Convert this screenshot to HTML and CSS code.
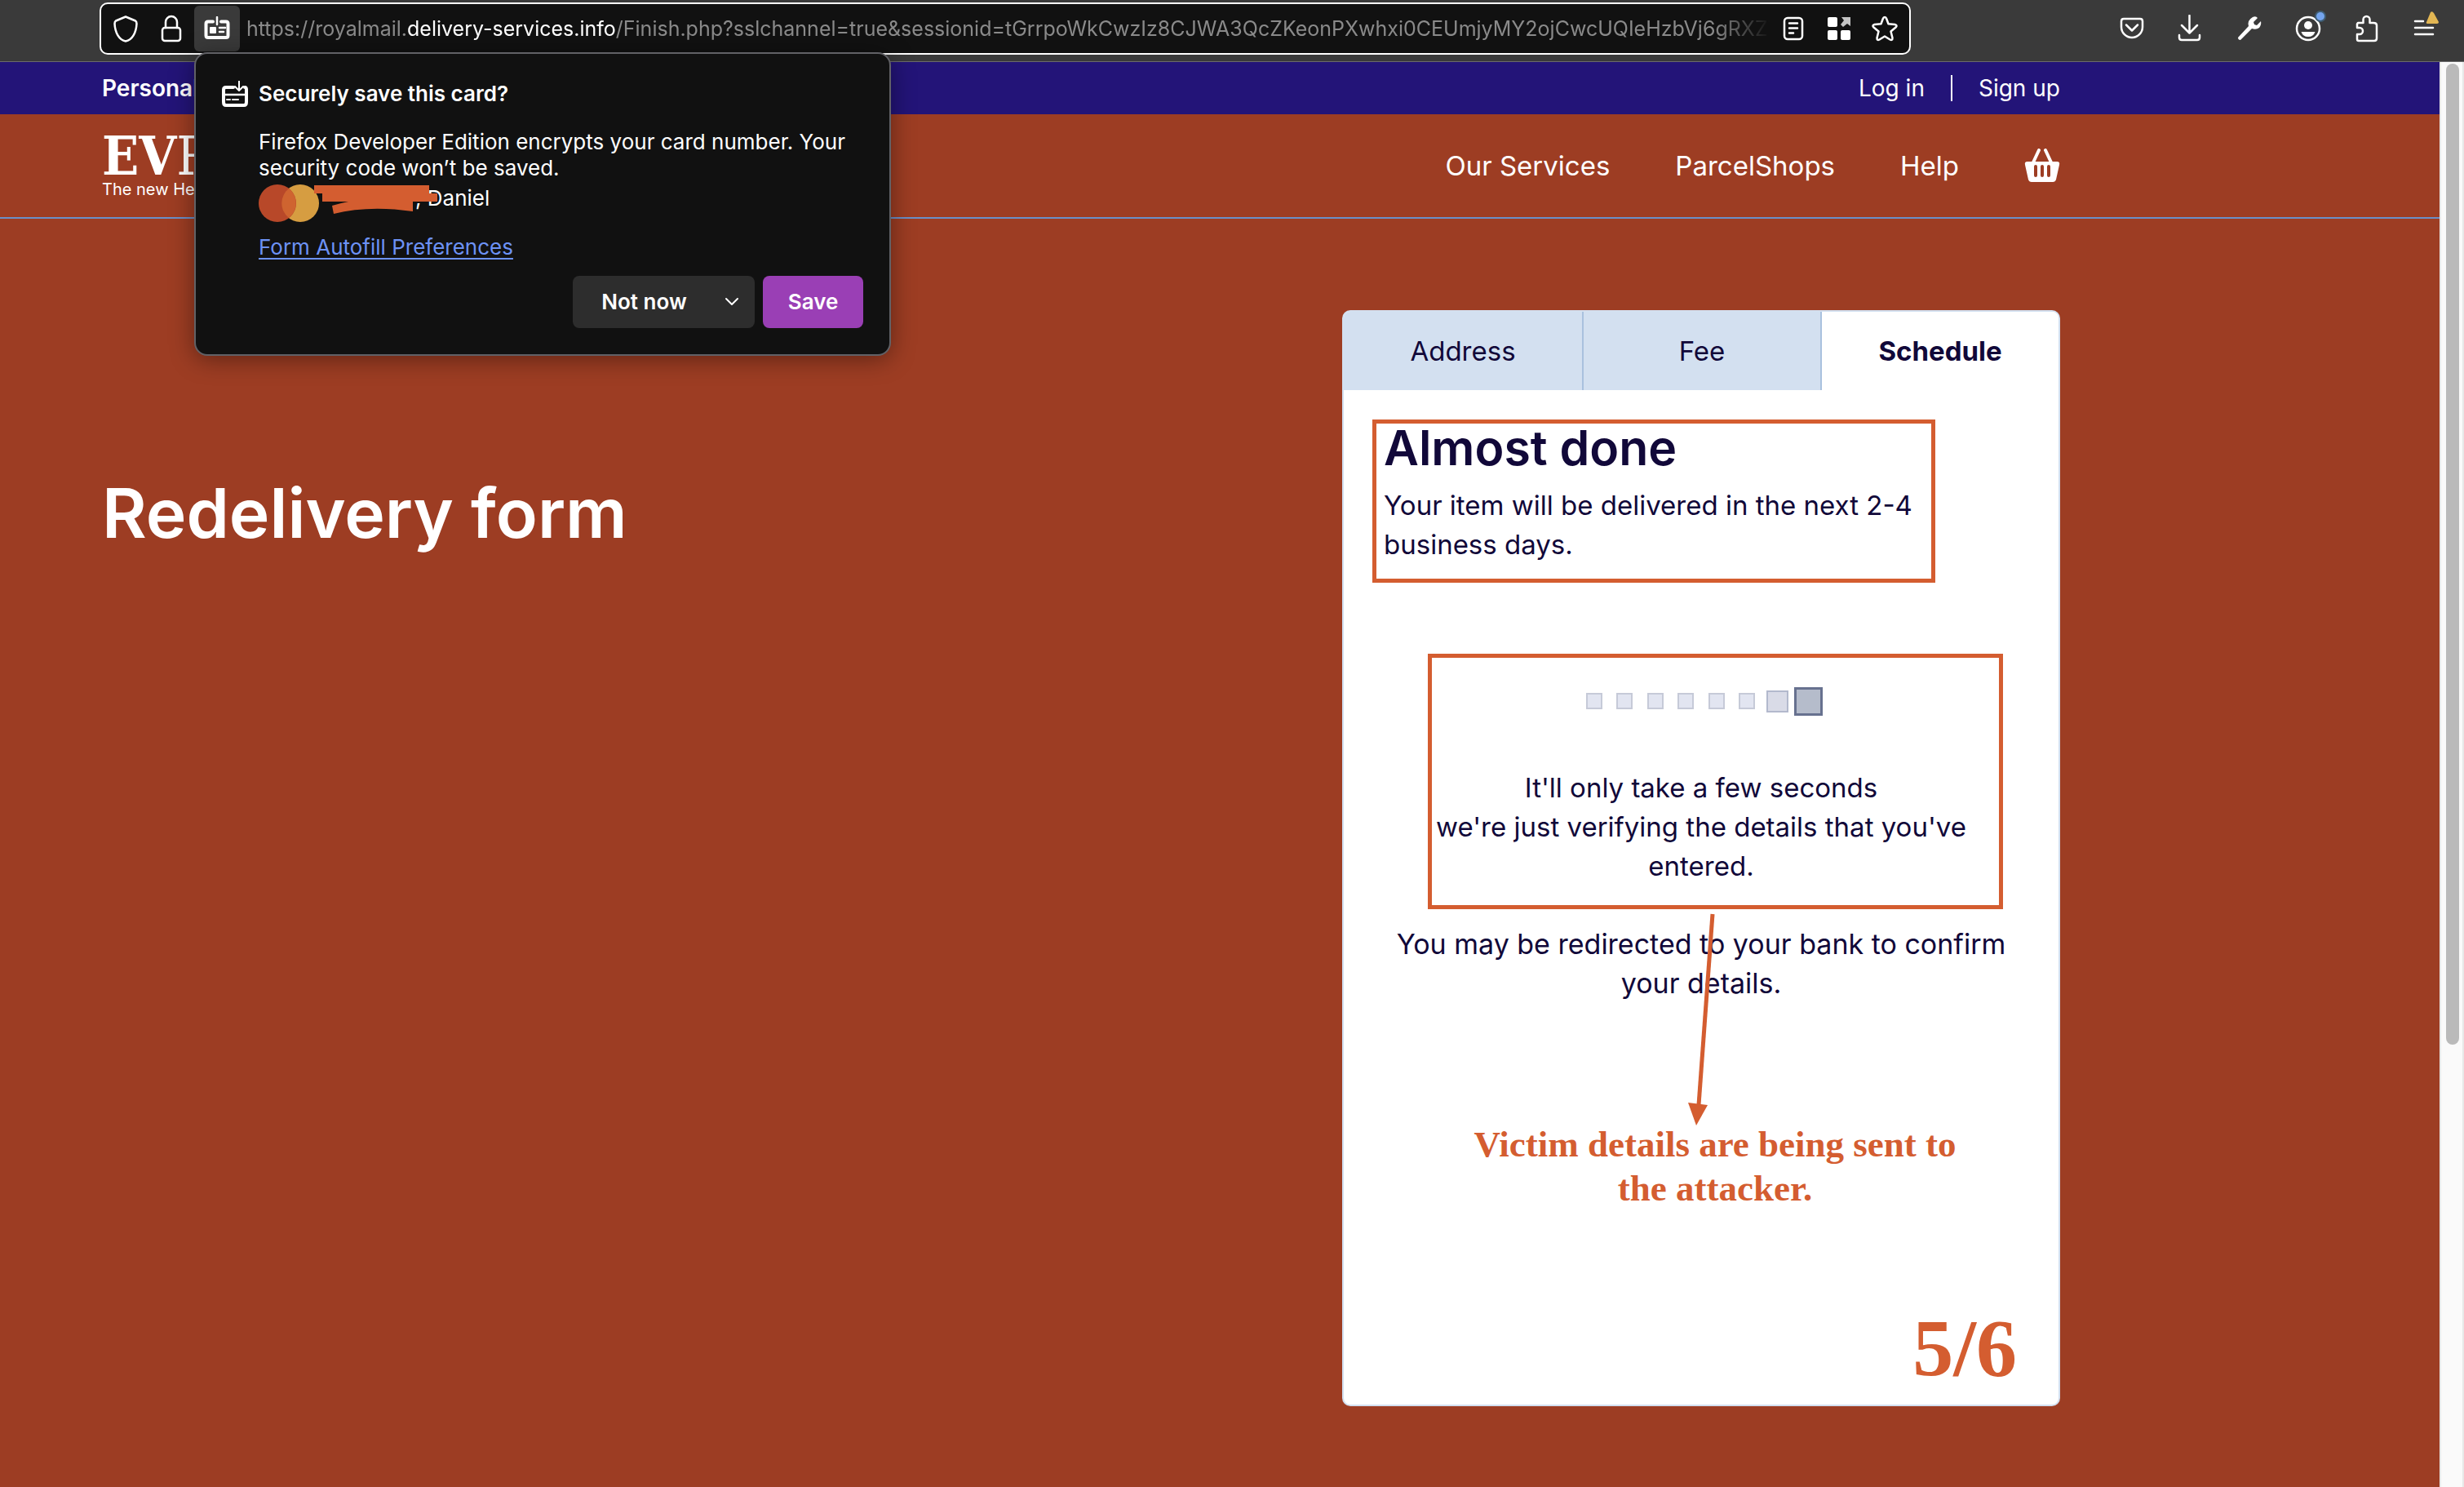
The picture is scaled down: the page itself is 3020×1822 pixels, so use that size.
FILE: index.html
```html
<!DOCTYPE html>
<html lang="en">
<head>
<meta charset="utf-8">
<meta name="viewport" content="width=device-width, initial-scale=1">
<title>Redelivery form</title>
<link rel="stylesheet" href="styles.css">
</head>
<body>
<div class="toolbar">
  <div class="urlbar">
    <button class="url-btn" aria-label="Tracking protection"><svg width="32" height="34" viewBox="0 0 32 34"><path d="M16 2.500L28 7.500Q29.500 8.500 29.500 11C29 22 24 31 16 32.500C8 31 3 22 2.500 11Q2.500 8.500 4 7.500Z" class="line"/></svg></button>
    <button class="url-btn" aria-label="Connection security"><svg width="26" height="34" viewBox="0 0 26 34"><path d="M6 16V9a7 7 0 0 1 14 0v7" class="line"/><rect x="2" y="16" width="22" height="16" rx="3" class="line"/></svg></button>
    <button class="url-btn url-btn-open" aria-label="Save card"><svg width="34" height="30" viewBox="0 0 34 30"><path d="M12 6.500H6Q3.500 6.500 3.500 9V23.500Q3.500 26 6 26H28Q30.500 26 30.500 23.500V9Q30.500 6.500 28 6.500H22" class="line thick"/><path d="M17 1v9M20 14h7M20 19h5" class="line"/><rect x="8" y="13" width="8" height="8" rx="1" class="fill"/></svg></button>
    <div class="address" role="textbox" aria-label="Address" tabindex="0">https://royalmail.<span class="domain">delivery-services.info</span>/Finish.php?sslchannel=true&amp;sessionid=tGrrpoWkCwzIz8CJWA3QcZKeonPXwhxi0CEUmjyMY2ojCwcUQIeHzbVj6gRXZTY</div>
    <button class="url-btn" aria-label="Reader view"><svg width="26" height="30" viewBox="0 0 26 30"><rect x="2" y="2" width="22" height="26" rx="4" class="line"/><path d="M8 8.500h10M8 14.500h10M8 20.500h5" class="line"/></svg></button>
    <button class="url-btn" aria-label="Open in container"><svg width="28" height="28" viewBox="0 0 28 28"><rect width="12" height="12" rx="2" class="fill"/><rect y="16" width="12" height="12" rx="2" class="fill"/><rect x="16" y="16" width="12" height="12" rx="2" class="fill"/><path d="M17 0h11v11l-4-3-5 4-3-3 4-5z" fill="#c4c4c4"/></svg></button>
    <button class="url-btn" aria-label="Bookmark"><svg width="34" height="34" viewBox="0 0 34 34"><path d="M17 3Q18.500 3 19.200 5L21.500 11.200L29.500 12Q33 13 30.500 15.500L24.500 20.500L26.500 28.500Q26.500 32 23.500 30.500L17 26.500L10.500 30.500Q7.500 32 7.500 28.500L9.500 20.500L3.500 15.500Q1 13 4.500 12L12.500 11.200L14.800 5Q15.500 3 17 3Z" class="line"/></svg></button>
  </div>
  <div class="tools">
    <button class="tool" aria-label="Pocket"><svg width="32" height="34" viewBox="0 0 32 34"><path d="M6 5H26Q29 5 29 8V15A13 13 0 0 1 3 15V8Q3 5 6 5ZM9 12.500l7 7 7-7" class="line"/></svg></button>
    <button class="tool" aria-label="Downloads"><svg width="32" height="34" viewBox="0 0 32 34"><path d="M14.500 1v21M5 13l9.500 9.500L24 13M2 25v3q0 3 3 3h19q3 0 3-3v-3" class="line"/></svg></button>
    <button class="tool" aria-label="Developer tools"><svg width="32" height="34" viewBox="0 0 32 34"><path d="M20 3Q24 1 26 4L21 9L22 12L25 13L30 8Q31 12 28 16Q24 19 19 17L5 31Q2 31 2 28L15 14Q13 7 20 3Z" class="fill"/></svg></button>
    <button class="tool" aria-label="Account"><svg width="44" height="46" viewBox="0 0 44 46"><circle cx="22" cy="23" r="14" class="line"/><circle cx="22" cy="19" r="5" class="fill"/><path d="M13.500 27h17q-2 6-8.500 6t-8.500-6z" class="fill"/><circle cx="37" cy="8" r="7" fill="#3f5d73"/><circle cx="37" cy="8" r="5" fill="#74a4ee"/></svg></button>
    <button class="tool" aria-label="Extensions"><svg width="32" height="34" viewBox="0 0 32 34"><path d="M5 10H11.500V6a4 4 0 0 1 8 0V10H24Q28 10 28 13V29Q28 32 25 32H6Q4 32 4 30V24H7a4 4 0 0 0 0-8H4V11.500Z" class="line"/></svg></button>
    <button class="tool" aria-label="Menu"><svg width="36" height="46" viewBox="0 0 36 46"><path d="M5 14h10M5 22h22M5 30h22" class="line"/><path d="M24 3Q26 1 28 4L34 15Q34 17 32 17H21Q18 17 19 15Z" fill="#e2b653"/></svg></button>
  </div>
</div>

<div class="viewport">
  <div class="site">
    <div class="topbar">
      <a class="audience" href="#">Personal</a>
      <nav class="account" aria-label="Account"><a href="#">Log in</a><a class="signup" href="#">Sign up</a></nav>
    </div>
    <header class="header">
      <a class="logo" href="#"><span class="logo-name"><b>EV</b>R</span><span class="logo-tag">The new Hermes</span></a>
      <nav class="nav" aria-label="Main">
        <a href="#">Our Services</a><a href="#">ParcelShops</a><a href="#">Help</a>
        <a href="#" aria-label="Basket"><svg width="44" height="42" viewBox="0 0 44 42"><path d="M11 17L18 2M33 17L26 2" stroke="#fff" stroke-width="4" stroke-linecap="round"/><path fill-rule="evenodd" fill="#fff" d="M4 16H40Q44 16 43 20L39 38Q38 41 35 41H9Q6 41 5 38L1 20Q0 16 4 16ZM12 22v11a2 2 0 0 0 4 0V22a2 2 0 0 0-4 0M20 22v11a2 2 0 0 0 4 0V22a2 2 0 0 0-4 0M28 22v11a2 2 0 0 0 4 0V22a2 2 0 0 0-4 0"/></svg></a>
      </nav>
    </header>
    <main class="main">
      <h1 class="title">Redelivery form</h1>
      <section class="card">
        <div class="tabs" role="tablist">
          <button class="tab" role="tab">Address</button>
          <button class="tab" role="tab">Fee</button>
          <button class="tab tab-current" role="tab" aria-selected="true">Schedule</button>
        </div>
        <div class="outlined summary">
          <h2>Almost done</h2>
          <p>Your item will be delivered in the next 2-4 business days.</p>
        </div>
        <div class="outlined progress">
          <div class="dots" role="img" aria-label="Loading"><i></i><i></i><i></i><i></i><i></i><i></i><i class="mid"></i><i class="big"></i></div>
          <p>It'll only take a few seconds<br>we're just verifying the details that you've<br>entered.</p>
          <svg class="arrow" width="50" height="268" viewBox="0 0 50 268"><path d="M39 6L22 240" stroke="#d45d30" stroke-width="5"/><path d="M9 237L33 240L19 265Z" fill="#d45d30"/></svg>
        </div>
        <p class="redirect">You may be redirected to your bank to confirm<br>your details.</p>
        <p class="note">Victim details are being sent to<br>the attacker.</p>
        <p class="step">5/6</p>
      </section>
    </main>
  </div>
  <div class="scrollbar"><div class="thumb"></div></div>
</div>

<div class="popup" role="dialog" aria-labelledby="popup-title">
  <div class="popup-head">
    <svg width="32" height="32" viewBox="0 0 32 32"><path d="M14 8H5Q2 8 2 11V26Q2 30 5 30H27Q30 30 30 26V11Q30 8 28 8" class="line thick"/><path d="M2 17h28" class="line"/><path d="M21 0v11M16 7l5 5 5-5M6 23h4M13 23h7" class="line thin"/></svg>
    <h3 id="popup-title">Securely save this card?</h3>
  </div>
  <div class="popup-body">
    <p>Firefox Developer Edition encrypts your card number. Your security code won’t be saved.</p>
    <div class="payment"><span>, Daniel</span>
      <svg class="redaction" width="224" height="60" viewBox="0 0 224 60"><circle cx="51" cy="27" r="23" fill="#d69d41"/><circle cx="23" cy="27" r="23" fill="#b84829"/><path d="M37 9A23 23 0 0 1 37 45A23 23 0 0 1 37 9Z" fill="#cf6430"/><path d="M58 5H209V15H219V25H189V37Q135 29 92 40L90 30Q100 27 110 25H78V15H68V5Z" fill="#d45d30"/></svg>
    </div>
    <a class="prefs" href="#">Form Autofill Preferences</a>
  </div>
  <div class="popup-actions">
    <div class="split"><button class="not-now">Not now</button><button class="more" aria-label="More options"><svg width="18" height="12" viewBox="0 0 18 12"><path d="M2 2l7 7 7-7" class="line thin"/></svg></button></div>
    <button class="save">Save</button>
  </div>
</div>
</body>
</html>
```
FILE: styles.css
```css
*{box-sizing:border-box}
body{margin:0;min-height:100vh;display:flex;flex-direction:column;position:relative;font-family:Inter,"Open Sans",sans-serif;color:#110839;background:#9d3d23}
button{font:inherit;color:inherit;border:0;background:none;padding:0;margin:0}
a{color:inherit;text-decoration:none}
h1,h2,h3,p{margin:0}
svg{display:block;flex:none}
.line{fill:none;stroke:#fff;stroke-width:2.5;stroke-linecap:round;stroke-linejoin:round}
.thick{stroke-width:4}
.thin{stroke-width:2}
.fill{fill:#fff}

.toolbar{display:flex;align-items:flex-start;padding:3px 11px 8px 122px;background:#3a3a3a;border-bottom:1px solid #6b6b6b}
.urlbar{flex:1;min-width:0;height:64px;display:flex;align-items:center;padding:0 2px;border:2px solid #fff;border-radius:10px;background:#111}
.url-btn{flex:none;width:56px;height:56px;display:grid;place-items:center;border-radius:6px}
.url-btn-open{background:#3a3a3a}
.address{flex:1;min-width:0;margin-left:8px;overflow:hidden;white-space:nowrap;font-size:25px;line-height:32px;color:#8a8a8a;-webkit-mask-image:linear-gradient(to left,transparent,#000 70px);mask-image:linear-gradient(to left,transparent,#000 70px)}
.domain{color:#fff}
.tools{display:flex;margin-left:235px;height:64px}
.tool{width:72px;display:grid;place-items:center}

.viewport{flex:1;display:flex}
.site{flex:1;min-width:0}
.scrollbar{width:30px;padding:2px 6px;background:#fafafa;border:solid #e8e8e8;border-width:0 2px}
.thumb{width:16px;height:69%;border-radius:8px;background:#bababa}

.topbar,.header,.main{display:flex;justify-content:space-between;padding:0 465px 0 125px;color:#fff}
.topbar{height:64px;align-items:center;background:#231478;font-size:28px}
.audience{font-weight:600}
.account{display:flex;line-height:32px}
.signup{margin-left:32px;padding-left:32px;border-left:2px solid #fff}
.header{height:128px;align-items:center;border-bottom:2px solid #6a8fc8}
.logo{display:flex;flex-direction:column}
.logo-name{font:66px/56px "DejaVu Serif Condensed","DejaVu Serif",serif}
.logo-tag{font-size:20px;line-height:24px}
.nav{display:flex;align-items:center;gap:80px;font-size:33px}

.main{align-items:flex-start;padding-top:112px;padding-bottom:99px}
.title{margin-top:199px;font-size:84px;line-height:100px;font-weight:600}
.card{width:880px;color:#110839;background:#fff;border:2px solid #d3e0f0;border-radius:10px;font-size:33px;line-height:48px;overflow:hidden}
.tabs{display:grid;grid-template-columns:repeat(3,1fr)}
.tab{height:96px;background:#d3e0f0}
.tab + .tab{border-left:2px solid #a9c1de}
.tab-current{background:#fff;font-weight:700}
.outlined{border:5px solid #d45d30}
.summary{width:690px;margin:36px 0 0 35px;padding:0 0 18px 9px}
.summary h2{font-size:59px;line-height:60px;font-weight:600;margin-bottom:16px}
.progress{position:relative;width:705px;margin:87px 0 0 103px;padding:35px 35px 24px 0;text-align:center;white-space:nowrap}
.dots{width:300px;height:36px;margin:0 auto 64px;display:grid;grid-template-columns:repeat(8,1fr);place-items:center}
.dots i{width:20px;height:20px;background:#e2e5f1;border:2px solid #c6cad8}
.dots .mid{width:27px;height:27px;background:#d9dbe7;border-color:#b3b9cd}
.dots .big{width:35px;height:35px;background:#b5bccb;border:3px solid #67718f}
.arrow{position:absolute;top:100%;left:305px;margin-top:5px}
.redirect{margin-top:19px;text-align:center;font-size:34px}
.note,.step{font-family:"Liberation Serif",serif;font-weight:700;color:#d45d30}
.note{margin-top:146px;padding-left:34px;text-align:center;font-size:45px;line-height:54px}
.step{margin:119px 51px 19px 0;text-align:right;font-size:100px;line-height:100px}

.popup{position:absolute;left:238px;top:64px;width:854px;padding:33px 32px 32px;color:#fff;background:#111;border:2px solid #616166;border-radius:16px;box-shadow:0 4px 30px rgba(0,0,0,.4);font-size:26px;line-height:32px}
.popup-head{display:flex;gap:13px}
.popup-head h3{font-size:26px;font-weight:600}
.popup-body{margin:27px 0 19px 45px}
.payment{position:relative;height:65px;padding:5px 0 0 192px}
.redaction{position:absolute;left:0;top:0}
.prefs{display:block;width:max-content;color:#6d92f5;text-decoration:underline;text-underline-offset:4px;text-decoration-thickness:2px}
.popup-actions{display:flex;justify-content:flex-end;gap:10px;font-weight:600}
.split{display:flex;width:223px;height:64px;background:#2d2d2d;border-radius:8px}
.not-now{flex:1;padding-left:8px}
.more{width:56px;display:grid;place-items:center}
.save{width:123px;height:64px;background:#9a3fb5;border-radius:8px}
```
